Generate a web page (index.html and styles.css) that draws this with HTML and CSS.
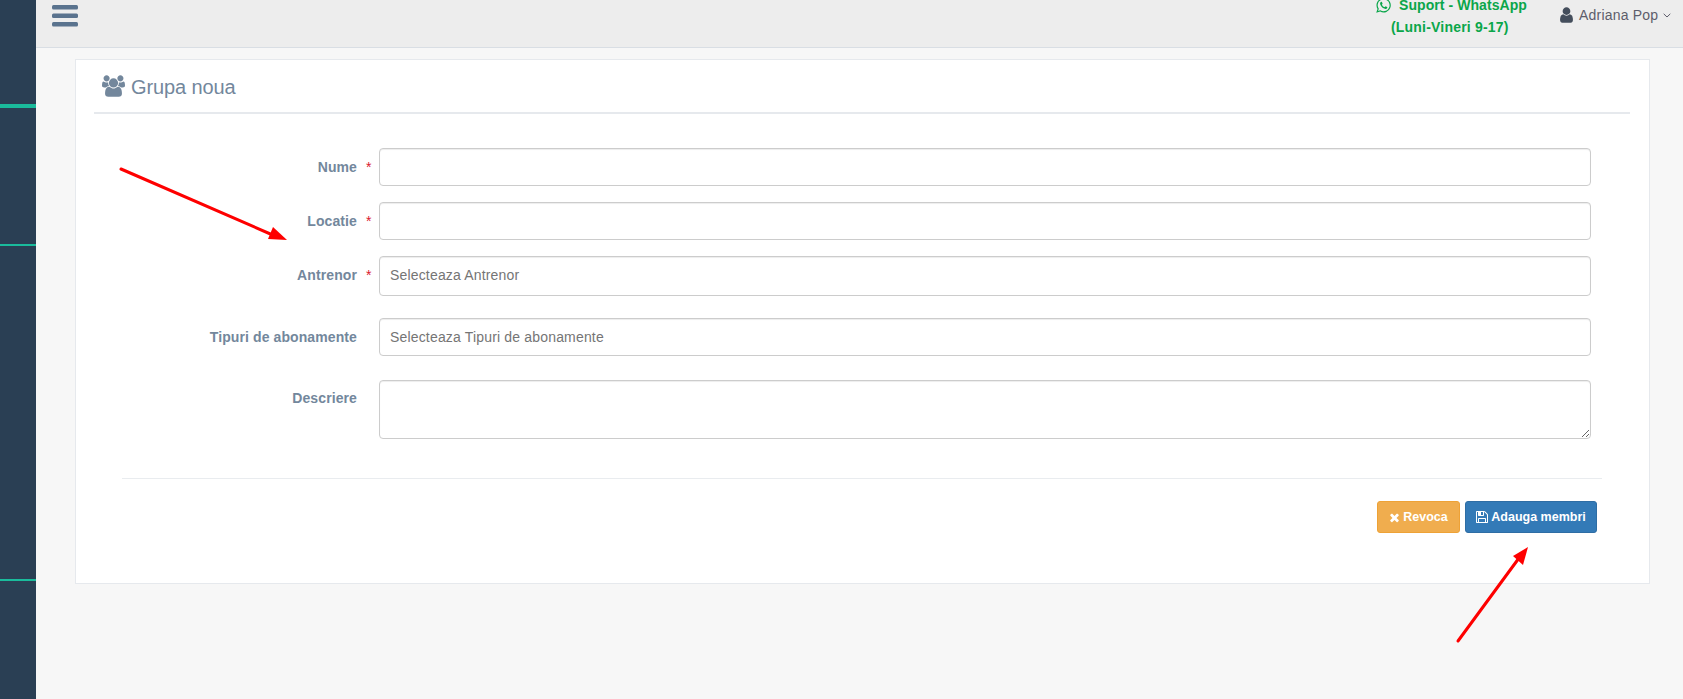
FILE: index.html
```html
<!DOCTYPE html>
<html lang="ro">
<head>
<meta charset="utf-8">
<title>Grupa noua</title>
<link rel="stylesheet" href="styles.css">
</head>
<body>
<div class="app">
  <aside class="sidebar">
    <div class="side-a"></div>
    <div class="side-b"></div>
    <div class="side-c"></div>
  </aside>
  <div class="main">
    <header class="topbar">
      <svg class="burger" viewBox="0 0 26 22" aria-hidden="true"><rect x="0" y="0" width="26" height="4.500" rx="1.500"/><rect x="0" y="8.500" width="26" height="4.500" rx="1.500"/><rect x="0" y="17" width="26" height="4.500" rx="1.500"/></svg>
      <div class="support">
        <div class="support-line"><svg class="ic-wa" viewBox="0 0 1536 1792" aria-hidden="true"><path d="M985 974q13 0 97.500 44t89.500 53q2 5 2 15 0 33-17 76-16 39-71 65.500t-102 26.500q-57 0-190-62-98-45-170-118t-148-185q-72-107-71-194v-8q3-91 74-158 24-22 52-22 6 0 18 1.500t19 1.500q19 0 26.500 6.500t15.500 27.500q8 20 33 88t25 75q0 21-34.500 57.500t-34.500 46.500q0 7 5 15 34 73 102 137 56 53 151 101 12 7 22 7 15 0 54-48.500t52-48.500zm-203 530q127 0 243.500-50t200.500-134 134-200.500 50-243.500-50-243.500-134-200.500-200.500-134-243.500-50-243.500 50-200.500 134-134 200.500-50 243.500q0 203 120 368l-79 233 242-77q158 104 345 104zm0-1382q153 0 292.500 60t240.500 161 161 240.500 60 292.500-60 292.500-161 240.500-240.500 161-292.500 60q-195 0-365-94l-417 134 136-405q-108-178-108-389 0-153 60-292.500t161-240.500 240.500-161 292.500-60z"/></svg><span>Suport - WhatsApp</span></div>
        <div class="support-hours">(Luni-Vineri 9-17)</div>
      </div>
      <div class="user">
        <svg class="ic-user" viewBox="0 0 1280 1792" aria-hidden="true"><path d="M1280 1399q0 109-62.500 187t-150.500 78h-854q-88 0-150.500-78t-62.500-187q0-85 8.500-160.500t31.500-152 58.500-131 94-89 134.500-34.500q131 128 313 128t313-128q76 0 134.500 34.500t94 89 58.500 131 31.500 152 8.500 160.500zm-256-887q0 159-112.500 271.500t-271.500 112.500-271.500-112.500-112.500-271.500 112.500-271.500 271.500-112.500 271.500 112.500 112.500 271.500z"/></svg>
        <span>Adriana Pop</span>
        <svg class="ic-chev" viewBox="0 0 8 5" aria-hidden="true"><path d="M.7.8 4 4 7.300.8" fill="none" stroke="#5d5d6b" stroke-width="1"/></svg>
      </div>
    </header>
    <main class="content">
      <section class="panel">
        <div class="panel-title">
          <svg class="ic-users" viewBox="0 0 1920 1792" aria-hidden="true"><path d="M593 896q-162 5-265 128h-134q-82 0-138-40.500t-56-118.500q0-353 124-353 6 0 43.500 21t97.500 42.500 119 21.500q67 0 133-23-5 37-5 66 0 139 81 256zm1071 637q0 120-73 189.500t-194 69.500h-874q-121 0-194-69.500t-73-189.500q0-53 3.500-103.500t14-109 26.500-108.500 43-97.500 62-81 85.500-53.500 111.500-20q10 0 43 21.500t73 48 107 48 135 21.500 135-21.500 107-48 73-48 43-21.500q61 0 111.500 20t85.500 53.500 62 81 43 97.500 26.500 108.500 14 109 3.500 103.500zm-1024-1277q0 106-75 181t-181 75-181-75-75-181 75-181 181-75 181 75 75 181zm704 384q0 159-112.500 271.500t-271.500 112.500-271.500-112.500-112.500-271.500 112.500-271.500 271.500-112.500 271.500 112.500 112.500 271.500zm576 225q0 78-56 118.500t-138 40.500h-134q-103-123-265-128 81-117 81-256 0-29-5-66 66 23 133 23 59 0 119-21.500t97.500-42.500 43.500-21q124 0 124 353zm-128-609q0 106-75 181t-181 75-181-75-75-181 75-181 181-75 181 75 75 181z"/></svg>
          <h2>Grupa noua</h2>
        </div>
        <form class="form">
          <div class="row row-a"><label class="lbl">Nume</label><span class="star">*</span><input class="field" type="text"></div>
          <div class="row row-a"><label class="lbl">Locatie</label><span class="star">*</span><input class="field" type="text"></div>
          <div class="row row-b"><label class="lbl">Antrenor</label><span class="star">*</span><input class="field tall" type="text" placeholder="Selecteaza Antrenor"></div>
          <div class="row row-c"><label class="lbl">Tipuri de abonamente</label><span class="star"></span><input class="field" type="text" placeholder="Selecteaza Tipuri de abonamente"></div>
          <div class="row row-d"><label class="lbl lbl-top">Descriere</label><span class="star"></span><textarea class="field area"></textarea></div>
          <div class="divider"></div>
          <div class="actions">
            <button type="button" class="btn btn-warn"><svg class="ic-x" viewBox="0 0 1408 1792" aria-hidden="true"><path d="M1298 1322q0 40-28 68l-136 136q-28 28-68 28t-68-28l-294-294-294 294q-28 28-68 28t-68-28l-136-136q-28-28-28-68t28-68l294-294-294-294q-28-28-28-68t28-68l136-136q28-28 68-28t68 28l294 294 294-294q28-28 68-28t68 28l136 136q28 28 28 68t-28 68l-294 294 294 294q28 28 28 68z"/></svg>Revoca</button>
            <button type="button" class="btn btn-blue"><svg class="ic-save" viewBox="0 0 1536 1792" aria-hidden="true"><path d="M384 1536h768v-384h-768v384zm896 0h128v-896q0-14-10-38.500t-20-34.500l-281-281q-10-10-34-20t-39-10v416q0 40-28 68t-68 28h-576q-40 0-68-28t-28-68v-416h-128v1280h128v-416q0-40 28-68t68-28h832q40 0 68 28t28 68v416zm-384-928v-320q0-13-9.500-22.500t-22.500-9.500h-192q-13 0-22.500 9.500t-9.500 22.500v320q0 13 9.500 22.500t22.500 9.500h192q13 0 22.500-9.500t9.500-22.500zm640 32v928q0 40-28 68t-68 28h-1344q-40 0-68-28t-28-68v-1344q0-40 28-68t68-28h928q40 0 88 20t76 48l280 280q28 28 48 76t20 88z"/></svg>Adauga membri</button>
          </div>
        </form>
      </section>
    </main>
  </div>
</div>
<svg class="arrows" viewBox="0 0 1683 699" aria-hidden="true">
  <path d="M121 169 275 236" fill="none" stroke="#fe0000" stroke-width="3" stroke-linecap="round"/>
  <path d="M287 240 268 239 273 227Z" fill="#fe0000"/>
  <path d="M1458 641 1519 558" fill="none" stroke="#fe0000" stroke-width="3" stroke-linecap="round"/>
  <path d="M1528 547 1513 556 1523 565Z" fill="#fe0000"/>
</svg>
</body>
</html>
```

FILE: styles.css
```css
* { box-sizing: border-box; }
html, body { margin: 0; height: 100%; overflow: hidden; }
body { font-family: "Liberation Sans", Arial, sans-serif; font-size: 14px; color: #73879c; background: #f7f7f7; }
.app { display: flex; height: 699px; }

.sidebar { width: 36px; flex: none; background: #2a3f54; }
.side-a { height: 108px; border-bottom: 4px solid #1abb9c; }
.side-b { height: 138px; border-bottom: 2px solid #1abb9c; }
.side-c { height: 335px; border-bottom: 2px solid #1abb9c; }

.main { flex: 1; min-width: 0; }
.topbar { height: 48px; background: #ededed; border-bottom: 1px solid #d9dee4; display: flex; align-items: flex-start; overflow: hidden; padding-left: 16px; }
.burger { width: 26px; height: 22px; margin-top: 5px; fill: #5a738e; flex: none; }
.support { margin-left: auto; font-weight: 700; font-size: 14px; letter-spacing: .07px; color: #0aa64a; width: 184px; }
.support-line { display: flex; align-items: center; height: 10px; }
.ic-wa { width: 15px; height: 17px; fill: #0aa64a; margin-right: 8px; flex: none; }
.support-hours { margin-top: 9px; line-height: 16px; padding-left: 15px; letter-spacing: .2px; }
.user { display: flex; align-items: center; height: 30px; width: 123px; color: #5d5d6b; flex: none; letter-spacing: .2px; }
.ic-user { width: 13px; height: 18px; fill: #444e5c; margin-right: 6px; }
.ic-chev { width: 8px; height: 5px; margin-left: 5px; margin-top: 1px; }

.content { padding: 11px 33px 0 39px; }
.panel { background: #fff; border: 1px solid #e6e9ed; height: 525px; padding: 0 19px 0 18px; }
.panel-title { height: 54px; border-bottom: 2px solid #e6e9ed; display: flex; align-items: center; padding: 2px 0 0 8px; }
.ic-users { width: 23px; height: 22px; fill: #73879c; margin-right: 6px; flex: none; margin-top: -2px; }
h2 { margin: 0; font-size: 20px; font-weight: 400; letter-spacing: -.1px; color: #73879c; }

.form { padding-top: 34px; }
.row { display: grid; grid-template-columns: 263px 22px 1212px; align-items: center; }
.row-a { margin-bottom: 16px; }
.row-b { margin-bottom: 22px; }
.row-c { margin-bottom: 24px; }
.row-d { margin-bottom: 39px; align-items: start; }
.lbl { text-align: right; font-weight: 700; font-size: 14px; letter-spacing: .1px; color: #73879c; }
.lbl-top { padding-top: 10px; }
.row-b .lbl, .row-b .star { margin-top: -2px; }
.star { color: #d9182d; padding-left: 9px; font-size: 14px; }
.field { display: block; width: 100%; height: 38px; border: 1px solid #ccc; border-radius: 4px; background: #fff; padding: 0 10px; font: 14px "Liberation Sans", Arial, sans-serif; letter-spacing: .17px; color: #555; box-shadow: inset 0 1px 1px rgba(0,0,0,.075); }
.field::placeholder { color: #757575; opacity: 1; }
.tall { height: 40px; padding-bottom: 2px; }
.area { height: 59px; }

.divider { height: 1px; background: #e9ecef; margin: 0 28px 0 28px; }
.actions { display: flex; justify-content: flex-end; gap: 5px; padding: 22px 33px 0 0; }
.btn { height: 32px; border-radius: 3px; border: 1px solid; color: #fff; font: 700 12.500px "Liberation Sans", Arial, sans-serif; display: inline-flex; align-items: center; justify-content: center; padding: 0; }
.btn-warn { width: 83px; background: #f0ad4e; border-color: #eea236; }
.btn-blue { width: 132px; background: #337ab7; border-color: #2e6da4; }
.ic-x { width: 11px; height: 13px; fill: #fff; margin-right: 3px; }
.ic-save { width: 12px; height: 14px; fill: #fff; margin-right: 3px; }

.arrows { position: absolute; left: 0; top: 0; width: 1683px; height: 699px; pointer-events: none; }
```
